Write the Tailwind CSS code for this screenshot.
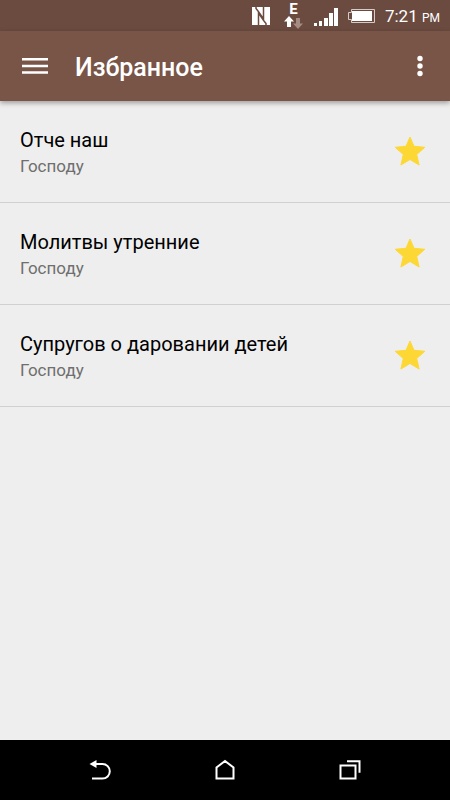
<!DOCTYPE html>
<html lang="ru">
<head>
<meta charset="utf-8">
<meta name="viewport" content="width=device-width, initial-scale=1">
<title>Избранное</title>
<script src="https://cdn.jsdelivr.net/npm/@tailwindcss/browser@4"></script>
</head>
<body class="flex min-h-screen flex-col bg-[#eeeeee] font-['Roboto',sans-serif]">
  <div class="flex h-[31px] items-center justify-end bg-[#6b4b40] pr-[10px] text-white">
    <svg class="mr-[13px] h-[20px] w-[20px]" viewBox="0 0 20 20" aria-label="NFC">
      <path fill="#fff" d="M1 1h18v18H1z"/>
      <path fill="none" stroke="#6b4b40" stroke-width="1.500" d="M7.500 19V7L13 15M12.500 1v12L7 5M5 1v1.500L7 5M15 19v-1.500L13 15"/>
    </svg>
    <div class="mr-[11px] flex w-[19px] flex-col items-center">
      <span class="text-[15px] leading-[13px] font-bold">E</span>
      <svg class="h-[13px] w-[19px]" viewBox="0 0 19 13" aria-hidden="true">
        <path fill="#fff" d="M5 0l5 5.500H7V11H3V5.500H0z"/>
        <path fill="#a48c84" d="M14 13l-5-5.500h3V2h4v5.500h3z"/>
      </svg>
    </div>
    <svg class="mr-[8px] h-[20px] w-[25px]" viewBox="0 0 25 20" fill="#fff" aria-label="Сигнал сети">
      <path d="M0 17h3v3H0zM5 15h3v5H5zM10 12h4v8h-4zM15 7h4v13h-4zM20 2h4v18h-4z"/>
    </svg>
    <svg class="mr-[10px] h-[16px] w-[28px]" viewBox="0 0 28 16" aria-label="Заряд батареи">
      <path fill="none" stroke="#d5ccc8" d="M4.500 1.500h23v13h-23v-3h-3v-7h3z"/>
      <path fill="#fff" d="M5 3h20v10H5z"/>
    </svg>
    <span class="pt-[2px] text-[17px] leading-5">7:21 <span class="text-[12px]">PM</span></span>
  </div>

  <header class="z-10 flex h-[70px] items-center bg-[#795548] px-[20px] text-white shadow-[0_2px_5px_rgba(0,0,0,0.35)]">
    <button type="button" aria-label="Меню" class="flex h-10 w-[30px] items-center justify-center">
      <svg class="h-[16px] w-[26px]" viewBox="0 0 26 16" fill="#fff" aria-hidden="true">
        <path d="M0 0h26v2.500H0zM0 6.700h26v2.500H0zM0 13.200h26v2.500H0z"/>
      </svg>
    </button>
    <h1 class="ml-[25px] flex-1 pt-[3px] text-[25px] leading-8 font-medium">Избранное</h1>
    <button type="button" aria-label="Ещё" class="flex h-10 w-[20px] items-center justify-center">
      <svg class="h-[22px] w-[6px]" viewBox="0 0 6 22" fill="#fff" aria-hidden="true">
        <circle cx="3" cy="3.500" r="2.700"/><circle cx="3" cy="11" r="2.700"/><circle cx="3" cy="18.500" r="2.700"/>
      </svg>
    </button>
  </header>

  <main class="flex-1">
    <ul>
      <li class="flex h-[102px] items-center border-b border-[#d0d0d0] px-[20px]">
        <a href="#" class="block flex-1 pt-[2px]">
          <span class="block text-[20px] leading-[26px] text-black">Отче наш</span>
          <span class="block text-[17px] leading-[26px] text-[#6f6f6f]">Господу</span>
        </a>
        <button type="button" aria-label="Убрать из избранного" class="p-1">
          <svg class="h-[32px] w-[32px]" viewBox="0 0 32 32" aria-hidden="true"><path fill="#fdd835" stroke="#fdd835" stroke-width="1" stroke-linejoin="round" d="M16 1l4 9.300 10.800 1-8.100 7.200 2.400 10.500L16 23.500 6.900 29l2.400-10.500-8.100-7.200 10.800-1z"/></svg>
        </button>
      </li>
      <li class="flex h-[102px] items-center border-b border-[#d0d0d0] px-[20px]">
        <a href="#" class="block flex-1 pt-[2px]">
          <span class="block text-[20px] leading-[26px] text-black">Молитвы утренние</span>
          <span class="block text-[17px] leading-[26px] text-[#6f6f6f]">Господу</span>
        </a>
        <button type="button" aria-label="Убрать из избранного" class="p-1">
          <svg class="h-[32px] w-[32px]" viewBox="0 0 32 32" aria-hidden="true"><path fill="#fdd835" stroke="#fdd835" stroke-width="1" stroke-linejoin="round" d="M16 1l4 9.300 10.800 1-8.100 7.200 2.400 10.500L16 23.500 6.900 29l2.400-10.500-8.100-7.200 10.800-1z"/></svg>
        </button>
      </li>
      <li class="flex h-[102px] items-center border-b border-[#d0d0d0] px-[20px]">
        <a href="#" class="block flex-1 pt-[2px]">
          <span class="block text-[20px] leading-[26px] text-black">Супругов о даровании детей</span>
          <span class="block text-[17px] leading-[26px] text-[#6f6f6f]">Господу</span>
        </a>
        <button type="button" aria-label="Убрать из избранного" class="p-1">
          <svg class="h-[32px] w-[32px]" viewBox="0 0 32 32" aria-hidden="true"><path fill="#fdd835" stroke="#fdd835" stroke-width="1" stroke-linejoin="round" d="M16 1l4 9.300 10.800 1-8.100 7.200 2.400 10.500L16 23.500 6.900 29l2.400-10.500-8.100-7.200 10.800-1z"/></svg>
        </button>
      </li>
    </ul>
  </main>

  <nav aria-label="Системная навигация" class="flex h-[60px] items-center justify-center gap-[101px] bg-black">
    <button type="button" aria-label="Назад" class="flex h-10 w-6 items-center justify-center">
      <svg class="h-[24px] w-[24px]" viewBox="0 0 24 24" aria-hidden="true">
        <path fill="none" stroke="#fff" stroke-width="2" d="M5 6h9.500a7.300 7.300 0 0 1 0 14.600H4"/>
        <path fill="#fff" d="M1.500 6L8.500 2v8z"/>
      </svg>
    </button>
    <button type="button" aria-label="Домой" class="flex h-10 w-6 items-center justify-center">
      <svg class="h-[24px] w-[24px]" viewBox="0 0 24 24" fill="none" stroke="#fff" stroke-width="2" aria-hidden="true">
        <path d="M3.500 20.500V9.500L12 3l8.500 6.500v11z"/>
      </svg>
    </button>
    <button type="button" aria-label="Недавние приложения" class="flex h-10 w-6 items-center justify-center">
      <svg class="h-[24px] w-[24px]" viewBox="0 0 24 24" fill="none" stroke="#fff" stroke-width="2" aria-hidden="true">
        <path d="M2.500 7.500h15v13h-15zM9 3.200h12.500v11.500"/>
      </svg>
    </button>
  </nav>
</body>
</html>
